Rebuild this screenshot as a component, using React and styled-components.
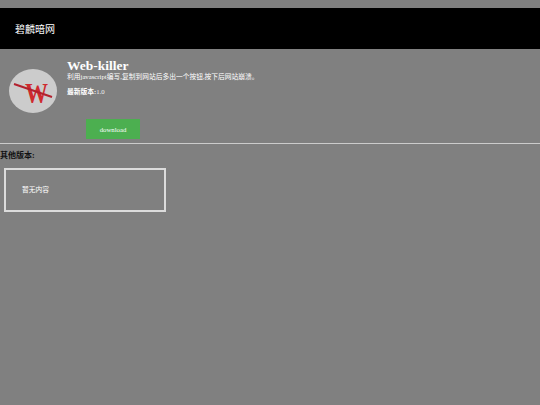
import React from "react";
import styled, { createGlobalStyle } from "styled-components";

const GlobalStyle = createGlobalStyle`
  html, body {
    margin: 0;
    padding: 0;
    min-height: 100%;
    background: #808080;
  }
  body {
    height: 405px;
    overflow: hidden;
    font-family: "Liberation Serif", "Noto Sans CJK SC", serif;
    color: #fff;
  }
`;

const Header = styled.header`
  display: flex;
  align-items: center;
  box-sizing: border-box;
  height: 41px;
  margin-top: 8px;
  padding: 0 0 1px 15px;
  background: #000;
  font-family: "Liberation Sans", "Noto Sans CJK SC", sans-serif;
  font-size: 10px;
  color: #fff;
`;

const Intro = styled.section`
  display: flex;
  gap: 10px;
  padding: 9px 0 0 9px;
`;

const LogoWrap = styled.div`
  flex: none;
  width: 48px;
  height: 44px;
  margin-top: 11px;
`;

const Info = styled.div`
  display: flex;
  flex-direction: column;
`;

const Title = styled.h1`
  margin: 0;
  font-size: 13.5px;
  line-height: 15px;
  font-weight: bold;
  color: #fff;
`;

const Desc = styled.p`
  margin: 0;
  font-size: 6.75px;
  line-height: 8px;
  color: #fff;
`;

const Version = styled.p`
  margin: 7px 0 0;
  font-size: 6.75px;
  line-height: 8px;
  color: #f0f0f0;

  strong {
    color: #fff;
  }
`;

const DownloadRow = styled.div`
  display: flex;
  padding: 6px 0 0 86px;
`;

const DownloadButton = styled.button`
  width: 54px;
  height: 20px;
  padding: 0;
  border: 0;
  background: #4caf50;
  color: #fff;
  font-family: inherit;
  font-size: 6.75px;
`;

const Divider = styled.hr`
  margin: 4px 0 0;
  border: 0;
  height: 1px;
  background: #ccc;
`;

const SectionTitle = styled.h2`
  margin: 7px 0 0;
  font-size: 8px;
  line-height: 10px;
  font-weight: bold;
  color: #111;
`;

const EmptyBox = styled.div`
  display: flex;
  align-items: center;
  box-sizing: border-box;
  width: 162px;
  height: 44px;
  margin: 7px 0 0 4px;
  padding: 0 0 2px 16px;
  border: 2px solid #dcdcdc;
  font-size: 6.75px;
  color: #fff;
`;

const Logo = () => (
  <svg width="48" height="44" viewBox="0 0 48 44">
    <ellipse cx="24" cy="22" rx="24" ry="22" fill="#ccc" />
    <text
      transform="translate(27.5 34) scale(1 1.25)"
      textAnchor="middle"
      fontFamily="Liberation Serif"
      fontWeight="bold"
      fontSize="23"
      fill="#cf2a2e"
    >
      W
    </text>
    <line x1="5" y1="15" x2="43" y2="28" stroke="#b3202e" strokeWidth="2" />
  </svg>
);

export default function App() {
  return (
    <>
      <GlobalStyle />
      <Header>碧麟暗网</Header>
      <Intro>
        <LogoWrap>
          <Logo />
        </LogoWrap>
        <Info>
          <Title>Web-killer</Title>
          <Desc>利用javascript编写,复制到网站后多出一个按钮,按下后网站崩溃。</Desc>
          <Version>
            <strong>最新版本:</strong>1.0
          </Version>
        </Info>
      </Intro>
      <DownloadRow>
        <DownloadButton>download</DownloadButton>
      </DownloadRow>
      <Divider />
      <SectionTitle>其他版本:</SectionTitle>
      <EmptyBox>暂无内容</EmptyBox>
    </>
  );
}
